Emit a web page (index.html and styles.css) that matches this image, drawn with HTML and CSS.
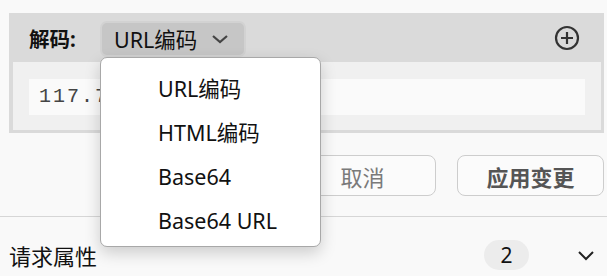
FILE: index.html
```html
<!DOCTYPE html>
<html lang="zh">
<head>
<meta charset="utf-8">
<link rel="stylesheet" href="styles.css">
</head>
<body>
<div class="page">
  <section class="panel">
    <div class="panel-head">
      <span class="label">解码:</span>
      <button class="select">URL编码
        <svg class="chev" width="18" height="10" viewBox="0 0 18 10"><path d="M2 2 L9 8 L16 2" fill="none" stroke="#444" stroke-width="2.2"/></svg>
      </button>
      <svg class="plus" width="26" height="26" viewBox="0 0 26 26"><circle cx="13" cy="13" r="11" fill="none" stroke="#333" stroke-width="2.2"/><path d="M13 7 V19 M7 13 H19" stroke="#333" stroke-width="2.2"/></svg>
    </div>
    <div class="panel-body">
      <div class="field">117.7</div>
    </div>
  </section>
  <div class="actions">
    <button class="btn">取消</button>
    <button class="btn btn-primary">应用变更</button>
  </div>
  <div class="row">
    <span class="row-title">请求属性</span>
    <span class="badge">2</span>
    <svg class="row-chev" width="18" height="12" viewBox="0 0 18 12"><path d="M2 3 L9 10 L16 3" fill="none" stroke="#222" stroke-width="2"/></svg>
  </div>
  <ul class="menu">
    <li>URL编码</li>
    <li>HTML编码</li>
    <li>Base64</li>
    <li>Base64 URL</li>
  </ul>
</div>
</body>
</html>
```
FILE: styles.css
```css
* { box-sizing: border-box; }
html, body { margin: 0; padding: 0; }
body {
  background: #f9f9f9;
  font-family: "Noto Sans", "Noto Sans CJK SC", sans-serif;
  color: #111;
  width: 607px;
  height: 276px;
  overflow: hidden;
}
.page { position: relative; padding-top: 13px; }
.panel {
  margin: 0 3px 0 9px;
  background: #dadada;
  padding: 0 3px 3px 4px;
}
.panel-head {
  height: 49px;
  display: flex;
  align-items: center;
  padding-left: 16px;
}
.label { font-weight: 700; font-size: 20.5px; color: #111; width: 71px; }
.select {
  height: 36px;
  margin-top: 2px;
  width: 146px;
  border: 2px solid #d2d2d2;
  border-radius: 7px;
  background: #c6c6c6;
  font-family: inherit;
  font-size: 21.5px;
  color: #111;
  display: flex;
  align-items: center;
  padding: 0 0 0 12px;
  gap: 14px;
}
.chev { margin-top: 1px; }
.plus { margin-left: auto; margin-right: 21px; }
.panel-body {
  background: #f0f0f0;
  height: 68px;
  padding: 17px 16px 0 16px;
}
.field {
  height: 36px;
  background: #fafafa;
  font-family: "Liberation Mono", monospace;
  font-size: 20px;
  letter-spacing: 2px;
  color: #444;
  line-height: 36px;
  padding: 0 0 0 10px;
}
.actions {
  display: flex;
  justify-content: flex-end;
  gap: 21px;
  padding: 22px 3px 0 0;
  height: 84px;
  border-bottom: 1px solid #d6d6d6;
}
.btn {
  width: 147px;
  height: 41px;
  border: 1.5px solid #cdcdcd;
  border-radius: 8px;
  background: #fbfbfb;
  font-family: inherit;
  font-size: 22px;
  color: #7a7a7a;
  padding: 0;
}
.btn-primary { font-weight: 700; color: #555; }
.row {
  display: flex;
  align-items: center;
  height: 59px;
  padding: 17px 12px 0 9px;
}
.row-title { font-size: 22px; color: #111; }
.badge {
  margin-left: auto;
  width: 45px;
  height: 30px;
  border-radius: 15px;
  background: #ececec;
  font-size: 21px;
  display: flex;
  align-items: center;
  justify-content: center;
  color: #111;
}
.row-chev { margin-left: 48px; }
.menu {
  position: absolute;
  left: 100px;
  top: 57px;
  width: 221px;
  height: 190px;
  margin: 0;
  padding: 9px 0 0 0;
  list-style: none;
  background: #fff;
  border: 1.5px solid #a8a8a8;
  border-radius: 7px;
  box-shadow: 0 6px 16px rgba(0,0,0,0.18);
}
.menu li {
  height: 44px;
  line-height: 44px;
  padding-left: 57px;
  font-size: 21.5px;
  color: #111;
}
```
